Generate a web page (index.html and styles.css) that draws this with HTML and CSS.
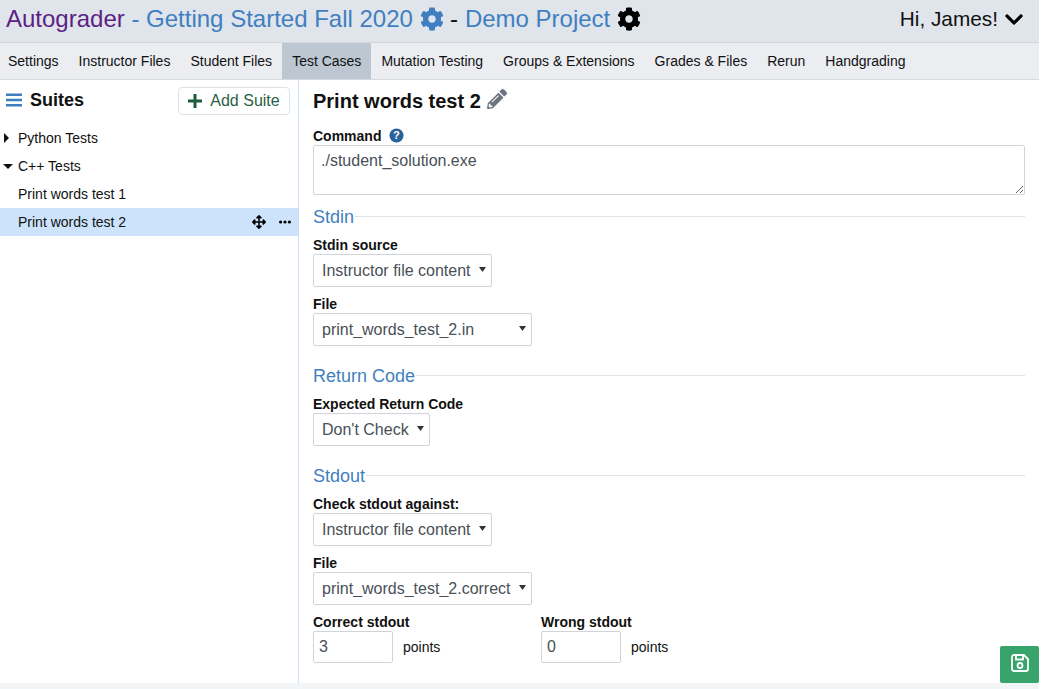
FILE: index.html
```html
<!DOCTYPE html>
<html lang="en">

<head>
    <meta charset="UTF-8">
    <meta name="viewport" content="width=device-width, initial-scale=1.0">
    <title>Test Cases</title>
    <link rel="stylesheet" href="styles.css">
</head>

<body>
    <div class="page">
        <header class="top">
            <div class="crumbs">
                <span class="brand">Autograder</span>
                <span class="link"> - Getting Started Fall 2020</span>
                <svg class="gear link" viewBox="0 0 512 512"><path d="M487.4 315.7l-42.6-24.6c4.3-23.2 4.3-47 0-70.2l42.6-24.6c4.900-2.800 7.100-8.600 5.500-14-11.100-35.600-30-67.800-54.700-94.600-3.800-4.100-10-5.100-14.800-2.300L380.800 110c-17.900-15.400-38.500-27.300-60.800-35.100V25.800c0-5.600-3.900-10.500-9.400-11.700-36.700-8.200-74.300-7.800-109.200 0-5.500 1.200-9.400 6.100-9.400 11.700V75c-22.200 7.900-42.800 19.800-60.800 35.100L88.700 85.500c-4.900-2.800-11-1.900-14.800 2.300-24.700 26.700-43.600 58.900-54.700 94.600-1.700 5.400.6 11.200 5.500 14L67.300 221c-4.300 23.200-4.300 47 0 70.200l-42.600 24.600c-4.900 2.800-7.100 8.600-5.500 14 11.100 35.600 30 67.800 54.700 94.600 3.800 4.100 10 5.100 14.800 2.300l42.600-24.600c17.900 15.400 38.500 27.300 60.800 35.100v49.200c0 5.600 3.900 10.500 9.400 11.700 36.700 8.200 74.300 7.800 109.200 0 5.500-1.200 9.400-6.100 9.400-11.700v-49.200c22.200-7.900 42.800-19.800 60.800-35.100l42.600 24.600c4.900 2.800 11 1.900 14.800-2.300 24.700-26.700 43.600-58.900 54.700-94.600 1.500-5.500-.7-11.300-5.600-14.100zM256 336c-44.100 0-80-35.900-80-80s35.900-80 80-80 80 35.900 80 80-35.900 80-80 80z"/></svg>
                <span class="dash">-</span>
                <span class="link">Demo Project</span>
                <svg class="gear" viewBox="0 0 512 512"><path d="M487.4 315.7l-42.6-24.6c4.3-23.2 4.3-47 0-70.2l42.6-24.6c4.900-2.800 7.100-8.600 5.500-14-11.100-35.600-30-67.800-54.700-94.600-3.800-4.100-10-5.100-14.800-2.300L380.800 110c-17.900-15.400-38.500-27.300-60.800-35.100V25.800c0-5.600-3.900-10.500-9.400-11.700-36.700-8.200-74.300-7.800-109.200 0-5.500 1.200-9.400 6.100-9.400 11.700V75c-22.200 7.900-42.800 19.800-60.800 35.100L88.700 85.500c-4.900-2.800-11-1.900-14.800 2.300-24.700 26.700-43.600 58.900-54.700 94.600-1.700 5.400.6 11.200 5.500 14L67.300 221c-4.300 23.200-4.300 47 0 70.200l-42.600 24.600c-4.900 2.800-7.100 8.600-5.500 14 11.100 35.600 30 67.800 54.700 94.600 3.800 4.100 10 5.100 14.800 2.300l42.600-24.600c17.900 15.400 38.500 27.300 60.800 35.100v49.200c0 5.600 3.900 10.500 9.400 11.700 36.700 8.200 74.300 7.800 109.200 0 5.500-1.200 9.400-6.100 9.400-11.700v-49.200c22.200-7.900 42.800-19.800 60.800-35.100l42.600 24.600c4.900 2.800 11 1.900 14.800-2.300 24.700-26.700 43.600-58.900 54.700-94.600 1.500-5.500-.7-11.300-5.600-14.100zM256 336c-44.100 0-80-35.900-80-80s35.900-80 80-80 80 35.900 80 80-35.900 80-80 80z"/></svg>
            </div>
            <div class="greeting">
                <span>Hi, James!</span>
                <svg class="chevron" viewBox="0 0 448 512"><path d="M207.029 381.476L12.686 187.132c-9.373-9.373-9.373-24.569 0-33.941l22.667-22.667c9.357-9.357 24.522-9.375 33.901-.04L224 284.505l154.745-154.021c9.379-9.335 24.544-9.317 33.901.04l22.667 22.667c9.373 9.373 9.373 24.569 0 33.941L240.971 381.476c-9.373 9.372-24.569 9.372-33.942 0z"/></svg>
            </div>
        </header>

        <nav class="tabs">
            <a>Settings</a>
            <a>Instructor Files</a>
            <a>Student Files</a>
            <a class="active">Test Cases</a>
            <a>Mutation Testing</a>
            <a>Groups &amp; Extensions</a>
            <a>Grades &amp; Files</a>
            <a>Rerun</a>
            <a>Handgrading</a>
        </nav>

        <div class="main">
            <aside class="sidebar">
                <div class="side-head">
                    <svg class="bars" viewBox="0 0 16 14"><path d="M0 .5h16v2.600H0zM0 5.700h16v2.600H0zM0 10.900h16v2.600H0z"/></svg>
                    <span class="side-title">Suites</span>
                    <button class="add-suite"><svg class="plus" viewBox="0 0 14 14"><path d="M5.500 0h3v5.500H14v3H8.500V14h-3V8.500H0v-3h5.500z"/></svg>Add Suite</button>
                </div>
                <div class="tree-row"><span class="caret-right"></span>Python Tests</div>
                <div class="tree-row"><span class="caret-down"></span>C++ Tests</div>
                <div class="tree-row">Print words test 1</div>
                <div class="tree-row selected">Print words test 2
                    <span class="row-icons">
                        <svg class="move" viewBox="0 0 512 512"><path d="M352.201 425.775l-79.196 79.196c-9.373 9.373-24.568 9.373-33.941 0l-79.196-79.196c-15.119-15.119-4.411-40.971 16.971-40.970h51.162L228 284H127.196v51.162c0 21.382-25.851 32.090-40.971 16.971L7.029 272.937c-9.373-9.373-9.373-24.569 0-33.941L86.225 159.800c15.119-15.119 40.971-4.411 40.971 16.971V228H228V127.196h-51.230c-21.382 0-32.090-25.851-16.971-40.971l79.196-79.196c9.373-9.373 24.568-9.373 33.941 0l79.196 79.196c15.119 15.119 4.411 40.971-16.971 40.971h-51.162V228h100.804v-51.162c0-21.382 25.851-32.090 40.970-16.971l79.196 79.196c9.373 9.373 9.373 24.569 0 33.941L425.773 352.200c-15.119 15.119-40.971 4.411-40.970-16.971V284H284v100.804h51.230c21.382 0 32.090 25.851 16.971 40.971z"/></svg>
                        <svg class="dots" viewBox="0 0 12 4"><circle cx="1.600" cy="2" r="1.600"/><circle cx="6" cy="2" r="1.600"/><circle cx="10.400" cy="2" r="1.600"/></svg>
                    </span>
                </div>
            </aside>

            <section class="content">
                <h1 class="test-name">
                    <span>Print words test 2</span>
                    <svg class="pencil" viewBox="0 0 512 512"><path d="M497.900 142.100l-46.100 46.100c-4.700 4.700-12.300 4.700-17 0l-111-111c-4.700-4.700-4.700-12.300 0-17l46.100-46.100c18.700-18.700 49.100-18.700 67.900 0l60.100 60.100c18.800 18.700 18.800 49.100 0 67.900zM284.200 99.800L21.600 362.400.4 483.900c-2.900 16.400 11.400 30.600 27.800 27.800l121.500-21.300 262.600-262.600c4.300-4.300 4.300-11.300 0-15.600L299.900 99.800c-4.400-4.300-11.400-4.300-15.700 0zM124.100 339.900c-5-5-5-13 0-18l154-154c5-5 13-5 18 0s5 13 0 18l-154 154c-5 5-13 5-18 0zM88 424h48v36.300l-64.500 11.300-31.100-31.100L51.700 376H88v48z"/></svg>
                </h1>

                <label class="field-label">Command
                    <svg class="help" viewBox="0 0 16 16"><circle cx="8" cy="8" r="7.500"/><text x="8" y="12.200" text-anchor="middle">?</text></svg>
                </label>
                <textarea class="command" rows="2">./student_solution.exe</textarea>

                <div class="section-title first"><span>Stdin</span></div>
                <label class="field-label">Stdin source</label>
                <select class="w-source"><option>Instructor file content</option></select>
                <label class="field-label gap">File</label>
                <select class="w-file"><option>print_words_test_2.in</option></select>

                <div class="section-title"><span>Return Code</span></div>
                <label class="field-label">Expected Return Code</label>
                <select class="w-code"><option>Don't Check</option></select>

                <div class="section-title"><span>Stdout</span></div>
                <label class="field-label">Check stdout against:</label>
                <select class="w-source"><option>Instructor file content</option></select>
                <label class="field-label gap">File</label>
                <select class="w-file"><option>print_words_test_2.correct</option></select>

                <div class="points-row">
                    <div class="points">
                        <label class="field-label">Correct stdout</label>
                        <div class="points-input"><input type="text" value="3"><span>points</span></div>
                    </div>
                    <div class="points">
                        <label class="field-label">Wrong stdout</label>
                        <div class="points-input"><input type="text" value="0"><span>points</span></div>
                    </div>
                </div>
            </section>
        </div>

        <button class="save"><svg viewBox="0 0 18 18"><path d="M1 3a2 2 0 0 1 2-2h10l4 4v10a2 2 0 0 1-2 2H3a2 2 0 0 1-2-2z" fill="none" stroke="currentColor" stroke-width="1.800"/><path d="M5 1v4.500h7V1" fill="none" stroke="currentColor" stroke-width="1.800"/><circle cx="9" cy="11.500" r="2.500" fill="none" stroke="currentColor" stroke-width="1.800"/></svg></button>
    </div>
</body>

</html>
```

FILE: styles.css
```css
html, body {
    margin: 0;
    height: 100%;
    overflow: hidden;
    background-color: #fff;
    font-family: "Liberation Sans", Arial, sans-serif;
    color: #111;
}
.page {
    position: relative;
    width: 1039px;
    height: 689px;
    display: flex;
    flex-direction: column;
}
.top {
    height: 43px;
    flex: none;
    box-sizing: border-box;
    padding: 0 16px 4px 6px;
    background-color: #e0e4eb;
    border-bottom: 1px solid #d3d7dd;
    display: flex;
    justify-content: space-between;
    align-items: center;
    font-size: 24px;
}
.crumbs {
    display: flex;
    align-items: center;
    white-space: pre;
}
.brand {
    color: #5b1f85;
}
.link {
    color: #3f7fc1;
    fill: #3f7fc1;
}
.gear {
    width: 24px;
    height: 24px;
    margin-left: 7px;
}
.dash {
    margin: 0 7px 0 6px;
}
.greeting {
    display: flex;
    align-items: center;
    font-size: 20.800px;
}
.chevron {
    width: 18px;
    height: 21px;
    margin-left: 7px;
}
.tabs {
    height: 37px;
    flex: none;
    box-sizing: border-box;
    display: flex;
    background-color: #ebedf1;
    border-bottom: 1px solid #d6dade;
    font-size: 14px;
}
.tabs a {
    padding: 0 10px;
    line-height: 36px;
    color: #111;
}
.tabs a:first-child {
    padding-left: 8px;
}
.tabs .active {
    background-color: #bcc7d1;
}
.main {
    flex: 1;
    display: flex;
    min-height: 0;
    margin-bottom: 6px;
}
.sidebar {
    width: 298px;
    flex: none;
    border-right: 1px solid #c9e0f5;
    font-size: 14px;
}
.side-head {
    height: 44px;
    box-sizing: border-box;
    display: flex;
    align-items: center;
    padding: 0 8px 2px 6px;
}
.bars {
    width: 16px;
    height: 14px;
    margin-top: -2px;
    fill: #3f7fc1;
}
.side-title {
    flex: 1;
    margin-left: 8px;
    margin-top: -2px;
    font-size: 18px;
    font-weight: bold;
}
.add-suite {
    height: 28px;
    width: 112px;
    box-sizing: border-box;
    padding: 0;
    display: flex;
    align-items: center;
    justify-content: center;
    background-color: #fff;
    border: 1px solid #dbe3ea;
    border-radius: 4px;
    color: #2a5f45;
    font-family: inherit;
    font-size: 16px;
}
.plus {
    width: 14px;
    height: 14px;
    margin-right: 8px;
    fill: #1f5c3e;
}
.tree-row {
    position: relative;
    height: 28px;
    line-height: 28px;
    padding-left: 18px;
}
.tree-row.selected {
    background-color: #cce3fb;
}
.caret-right, .caret-down {
    position: absolute;
    width: 0;
    height: 0;
}
.caret-right {
    left: 4px;
    top: 9px;
    border-left: 5px solid #111;
    border-top: 5px solid transparent;
    border-bottom: 5px solid transparent;
}
.caret-down {
    left: 3px;
    top: 12px;
    border-top: 5px solid #111;
    border-left: 5px solid transparent;
    border-right: 5px solid transparent;
}
.row-icons {
    position: absolute;
    right: 6px;
    top: 0;
    height: 28px;
    display: flex;
    align-items: center;
    gap: 12px;
}
.move {
    width: 14px;
    height: 14px;
}
.dots {
    width: 14px;
    height: 4px;
}
.content {
    flex: 1;
    box-sizing: border-box;
    padding: 0 14px;
}
.test-name {
    margin: 0;
    height: 44px;
    box-sizing: border-box;
    padding-bottom: 2px;
    display: flex;
    align-items: center;
    font-size: 20px;
}
.pencil {
    width: 20px;
    height: 20px;
    margin-left: 6px;
    margin-top: -4px;
    fill: #6b7480;
}
.field-label {
    display: block;
    margin-bottom: 1px;
    font-size: 14px;
    font-weight: bold;
    line-height: 16px;
}
.test-name + .field-label {
    margin-top: 4px;
    margin-bottom: 0;
}
.help {
    width: 15px;
    height: 15px;
    margin-left: 4px;
    vertical-align: -2px;
    fill: #28629b;
}
.help text {
    fill: #fff;
    font-size: 12px;
    font-weight: bold;
}
.command {
    display: block;
    box-sizing: border-box;
    width: 712px;
    height: 50px;
    margin: 1px 0 0;
    padding: 6px 7px;
    border: 1px solid #ced4da;
    border-radius: 2px;
    color: #495057;
    font-family: inherit;
    font-size: 16px;
}
select {
    display: block;
    height: 33px;
    box-sizing: border-box;
    padding: 0 8px;
    appearance: none;
    background: #fff url("data:image/svg+xml,%3Csvg xmlns='http://www.w3.org/2000/svg' viewBox='0 0 7 5'%3E%3Cpath d='M0 0h7L3.500 5z' fill='%23333'/%3E%3C/svg%3E") no-repeat right 5px top 12px / 7px 5px;
    border: 1px solid #ced4da;
    border-radius: 2px;
    color: #495057;
    font-family: inherit;
    font-size: 16px;
}
.w-source {
    width: 179px;
}
.w-file {
    width: 219px;
}
.w-code {
    width: 117px;
}
.section-title {
    position: relative;
    height: 20px;
    line-height: 20px;
    margin-top: 20px;
    margin-bottom: 10px;
    color: #3f7fc1;
    font-size: 18px;
}
.section-title.first {
    margin-top: 12px;
}
.section-title span {
    position: relative;
    z-index: 1;
    padding-right: 1px;
    background-color: #fff;
}
.section-title::after {
    content: "";
    position: absolute;
    left: 0;
    right: 0;
    top: 9px;
    border-top: 1px solid #dfe3e7;
}
.gap {
    margin-top: 9px;
}
.points-row {
    display: flex;
    margin-top: 9px;
}
.points {
    width: 228px;
}
.points-input {
    display: flex;
    align-items: center;
    font-size: 14px;
}
.points-input input {
    width: 80px;
    height: 32px;
    box-sizing: border-box;
    margin-right: 10px;
    padding: 0 5px;
    border: 1px solid #ced4da;
    border-radius: 2px;
    color: #495057;
    font-family: inherit;
    font-size: 16px;
}
.save {
    position: absolute;
    left: 1000px;
    top: 646px;
    width: 39px;
    height: 37px;
    padding: 0;
    border: 0;
    border-radius: 2px;
    background-color: #38a36b;
    color: #fff;
}
.save svg {
    width: 18px;
    height: 18px;
}
.page::after {
    content: "";
    position: absolute;
    left: 0;
    right: 0;
    bottom: 0;
    height: 6px;
    background-color: #f3f4f6;
}
```
